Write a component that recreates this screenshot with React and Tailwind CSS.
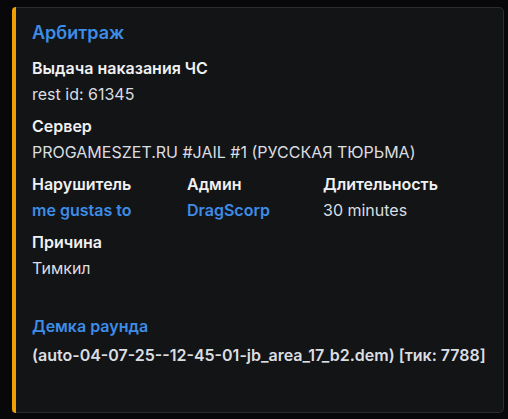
export default function App() {
  const font = { fontFamily: 'Inter, "Noto Sans", sans-serif' };
  return (
    <div className="w-[508px] h-[419px] bg-[#08080a] pt-[7px] pl-[12px]" style={font}>
      <div className="flex w-[492px] h-[406px]">
        <div className="w-[4px] bg-[#f0a000] rounded-l-[4px]" />
        <div className="flex-1 bg-[#131416] border border-l-0 border-[#2c2d31] rounded-r-[5px] pl-[16px] pr-4 pt-[13px]">
          <div className="text-[18px] leading-[24px] font-semibold text-[#3d8ce6]">Арбитраж</div>
          <div className="mt-[11px] flex flex-col gap-[8px]">
            <div className="flex flex-col gap-[2px]">
              <div className="text-[16px] leading-[24px] font-semibold text-[#f0f1f3]">Выдача наказания ЧС</div>
              <div className="text-[16px] leading-[24px] text-[#dbdee1]">rest id: 61345</div>
            </div>
            <div className="flex flex-col gap-[2px]">
              <div className="text-[16px] leading-[24px] font-semibold text-[#f0f1f3]">Сервер</div>
              <div className="text-[16px] leading-[24px] text-[#dbdee1]">PROGAMESZET.RU #JAIL #1 (РУССКАЯ ТЮРЬМА)</div>
            </div>
            <div className="flex">
              <div className="w-[155px] flex flex-col gap-[2px]">
                <div className="text-[16px] leading-[24px] font-semibold text-[#f0f1f3]">Нарушитель</div>
                <div className="text-[16px] leading-[24px] font-semibold text-[#3d8ce6]">me gustas to</div>
              </div>
              <div className="w-[136px] flex flex-col gap-[2px]">
                <div className="text-[16px] leading-[24px] font-semibold text-[#f0f1f3]">Админ</div>
                <div className="text-[16px] leading-[24px] font-semibold text-[#3d8ce6]">DragScorp</div>
              </div>
              <div className="flex flex-col gap-[2px]">
                <div className="text-[16px] leading-[24px] font-semibold text-[#f0f1f3]">Длительность</div>
                <div className="text-[16px] leading-[24px] text-[#dbdee1]">30 minutes</div>
              </div>
            </div>
            <div className="flex flex-col gap-[2px]">
              <div className="text-[16px] leading-[24px] font-semibold text-[#f0f1f3]">Причина</div>
              <div className="text-[16px] leading-[24px] text-[#dbdee1]">Тимкил</div>
            </div>
            <div className="flex flex-col gap-[5px] mt-[26px]">
              <div className="text-[16px] leading-[24px] font-semibold text-[#3d8ce6]">Демка раунда</div>
              <div className="text-[16px] leading-[24px] font-semibold text-[#dbdee1]">(auto-04-07-25--12-45-01-jb_area_17_b2.dem) [тик: 7788]</div>
            </div>
          </div>
        </div>
      </div>
    </div>
  );
}
